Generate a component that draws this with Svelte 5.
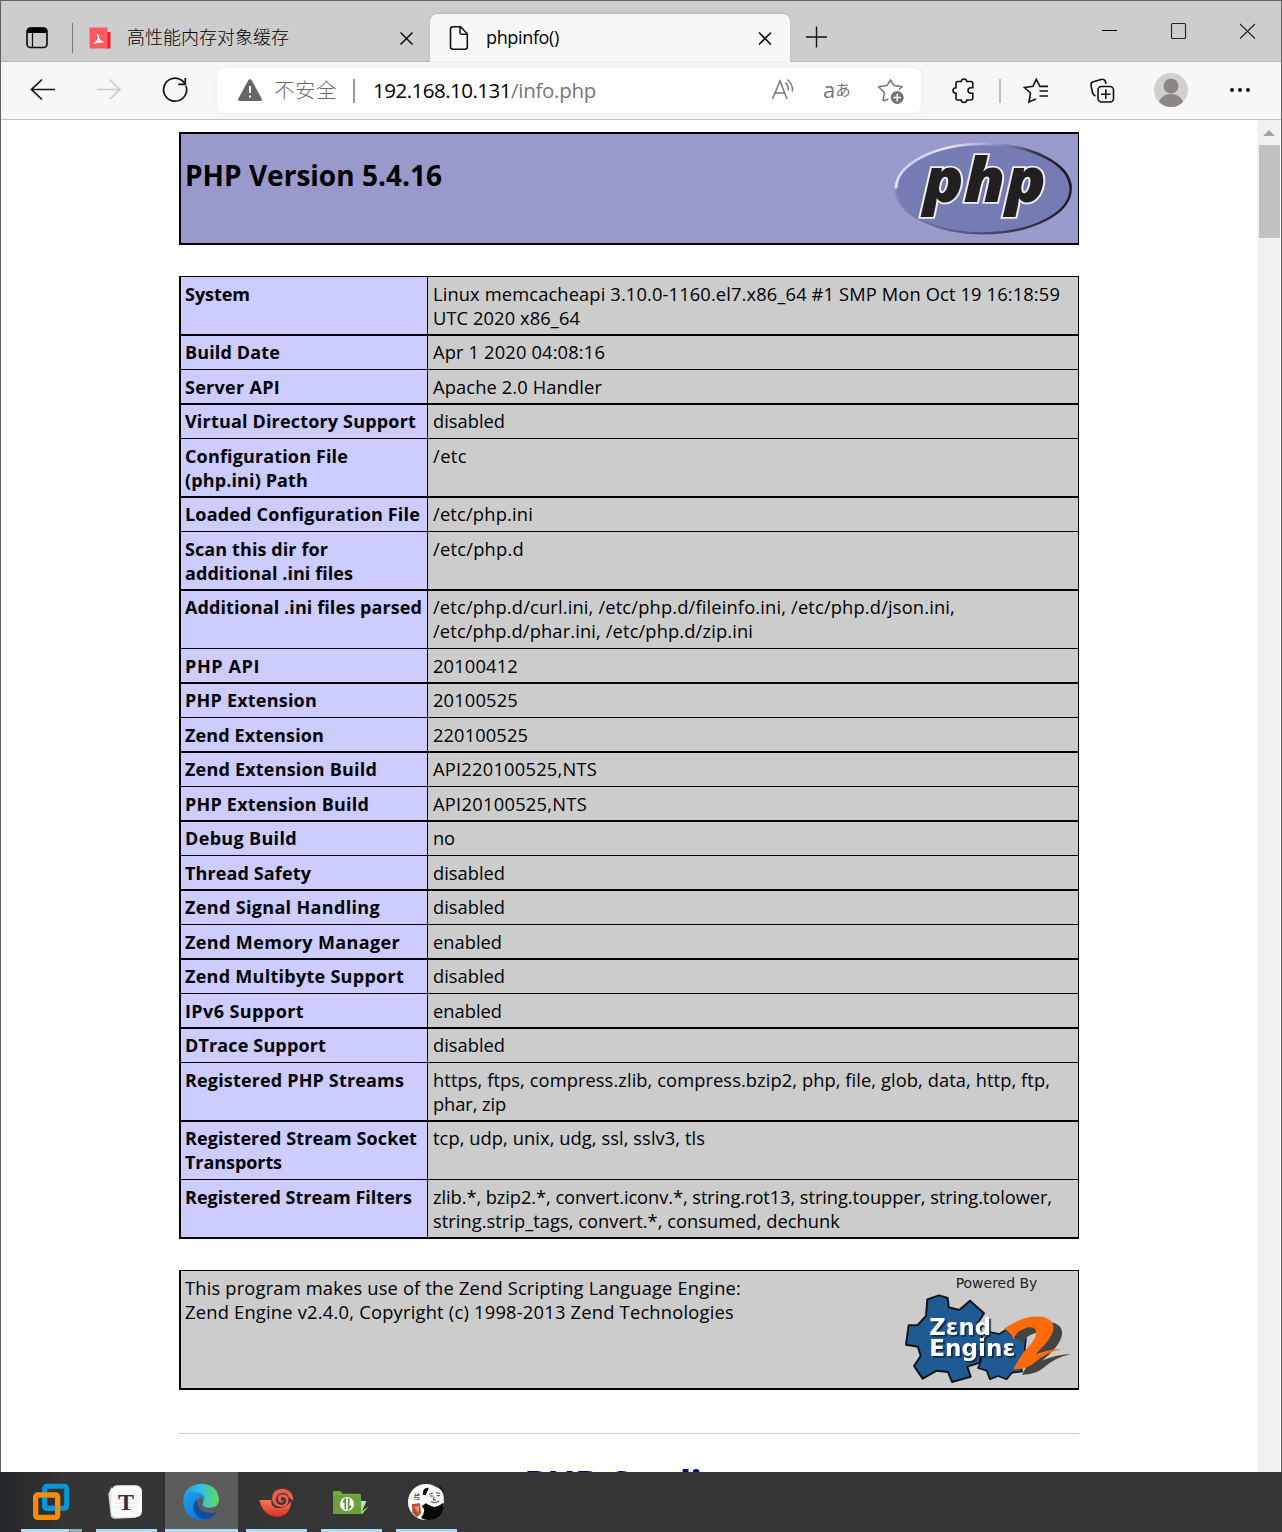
<script>
  const rows = [
    [[['System', 65]], [['Linux memcacheapi 3.10.0-1160.el7.x86_64 #1 SMP Mon Oct 19 16:18:59', 627], ['UTC 2020 x86_64', 147]]],
    [[['Build Date', 95]], [['Apr 1 2020 04:08:16', 172]]],
    [[['Server API', 95]], [['Apache 2.0 Handler', 169]]],
    [[['Virtual Directory Support', 231]], [['disabled', 72]]],
    [[['Configuration File', 163], ['(php.ini) Path', 123]], [['/etc', 34]]],
    [[['Loaded Configuration File', 235]], [['/etc/php.ini', 100]]],
    [[['Scan this dir for', 143], ['additional .ini files', 168]], [['/etc/php.d', 91]]],
    [[['Additional .ini files parsed', 237]], [['/etc/php.d/curl.ini, /etc/php.d/fileinfo.ini, /etc/php.d/json.ini,', 522], ['/etc/php.d/phar.ini, /etc/php.d/zip.ini', 320]]],
    [[['PHP API', 75]], [['20100412', 85]]],
    [[['PHP Extension', 132]], [['20100525', 85]]],
    [[['Zend Extension', 139]], [['220100525', 95]]],
    [[['Zend Extension Build', 192]], [['API220100525,NTS', 164]]],
    [[['PHP Extension Build', 184]], [['API20100525,NTS', 154]]],
    [[['Debug Build', 112]], [['no', 22]]],
    [[['Thread Safety', 126]], [['disabled', 72]]],
    [[['Zend Signal Handling', 195]], [['disabled', 72]]],
    [[['Zend Memory Manager', 215]], [['enabled', 69]]],
    [[['Zend Multibyte Support', 219]], [['disabled', 72]]],
    [[['IPv6 Support', 119]], [['enabled', 69]]],
    [[['DTrace Support', 141]], [['disabled', 72]]],
    [[['Registered PHP Streams', 219]], [['https, ftps, compress.zlib, compress.bzip2, php, file, glob, data, http, ftp,', 617], ['phar, zip', 73]]],
    [[['Registered Stream Socket', 232], ['Transports', 97]], [['tcp, udp, unix, udg, ssl, sslv3, tls', 272]]],
    [[['Registered Stream Filters', 227]], [['zlib.*, bzip2.*, convert.iconv.*, string.rot13, string.toupper, string.tolower,', 619], ['string.strip_tags, convert.*, consumed, dechunk', 407]]],
  ];

  function fit(node, width) {
    const natural = node.getBoundingClientRect().width;
    node.style.letterSpacing = (width - natural) / node.textContent.length + 'px';
  }
</script>

<div class="screen">
  <div class="window">
    <header class="tabs">
      <svg class="ws" viewBox="25 1 24 61" width="24" height="61"><rect x="27" y="28" width="20" height="19.5" rx="3.5" fill="none" stroke="#111" stroke-width="1.7"/><path d="M27 33v-2q0-3.5 3.5-3.5h13q3.500 0 3.500 3.500v2z" fill="#000"/><path d="M32.500 33v14" stroke="#111" stroke-width="1.200"/></svg>
      <span class="sep"></span>
      <svg class="pdf" viewBox="88 1 24 61" width="24" height="61"><rect x="106" y="32" width="4.500" height="16.500" fill="#f51d1d"/><rect x="89.500" y="27.500" width="18" height="21" rx="1" fill="#ff5a5f"/><path d="M97 34q2 2 1.500 4.500t-4 5M98.500 38.500q1 2.500 4.500 4M94 43.500q4-2.500 9.500-1.500" fill="none" stroke="#fff" stroke-width="1.500"/></svg>
      <span class="cn"><span use:fit={162}>高性能内存对象缓存</span></span>
      <svg class="tabx" viewBox="396 1 22 61" width="22" height="61"><path d="M400.500 32.500l12 12m0-12l-12 12" stroke="#111" stroke-width="1.600"/></svg>
      <div class="tab">
        <svg viewBox="448 14 24 48" width="24" height="48"><path d="M453 26.800h7.500l6.800 7v13q0 2.500-2.500 2.500h-11.800q-2.500 0-2.500-2.500v-17.500q0-2.500 2.500-2.500z" fill="none" stroke="#111" stroke-width="1.600"/><path d="M460 27v5.200q0 2 2 2h5" fill="none" stroke="#111" stroke-width="1.500"/></svg>
        <span class="tabname"><span use:fit={73}>phpinfo()</span></span>
        <svg viewBox="754 14 22 48" width="22" height="48"><path d="M759 32.500l12 12m0-12l-12 12" stroke="#111" stroke-width="1.600"/></svg>
      </div>
      <svg class="plus" viewBox="804 1 26 61" width="26" height="61"><path d="M806 37h21M816.500 26.500v21" stroke="#111" stroke-width="1.400"/></svg>
      <svg class="min" viewBox="1100 1 20 61" width="20" height="61"><path d="M1102 30.500h15" stroke="#000"/></svg>
      <svg class="max" viewBox="1168 1 22 61" width="22" height="61"><rect x="1171.500" y="23.500" width="14" height="15" rx="1" fill="none" stroke="#222" stroke-width="1.100"/></svg>
      <svg class="wx" viewBox="1238 1 20 61" width="20" height="61"><path d="M1240 24l15 14.500m0-14.500l-15 14.500" stroke="#222" stroke-width="1.100"/></svg>
    </header>

    <nav class="bar">
      <svg class="back" viewBox="28 62 30 57" width="30" height="57"><path d="M55 89.500H32M42 79.500l-10.500 10 10.500 10" fill="none" stroke="#111" stroke-width="1.700"/></svg>
      <svg class="fwd" viewBox="94 62 30 57" width="30" height="57"><path d="M97 89.500h23M109.500 79.500l10.500 10-10.500 10" fill="none" stroke="#ccc" stroke-width="1.700"/></svg>
      <svg class="reload" viewBox="160 62 30 57" width="30" height="57"><path d="M186 86a11.500 11.500 0 1 1-4-5.500l3.500 3.500M185.300 78v6.300h-7" fill="none" stroke="#111" stroke-width="1.700"/></svg>
      <div class="address">
        <svg class="warn" viewBox="236 68 28 45" width="28" height="45"><path d="M248.200 80.500q1.800-3 3.600 0l9.800 18q1 2.500-1.600 2.500h-20q-2.600 0-1.600-2.500z" fill="#666"/><path d="M250 86v7M250 95.500v2" stroke="#fff" stroke-width="2"/></svg>
        <span class="unsafe"><span use:fit={63}>不安全</span></span>
        <span class="asep"></span>
        <span class="host"><span use:fit={138}>192.168.10.131</span></span>
        <span class="path"><span use:fit={85}>/info.php</span></span>
        <svg class="read" viewBox="768 68 30 45" width="30" height="45"><path d="M772.500 99l7.500-18 7 18M775 93h10M785.500 82.500q3.500 3.500 2.500 8M787 79.500q6 4 5.500 12" fill="none" stroke="#757575" stroke-width="1.500"/></svg>
        <span class="translate"><b>a</b>あ</span>
        <svg class="fav" viewBox="876 68 30 45" width="30" height="45"><path d="M883 101l1.500-8.500-6-5.700 8.500-1.200 3.500-5.600 3.600 5.600 8 1.200-3.500 3M883.500 101l5-2" fill="none" stroke="#757575" stroke-width="1.500" stroke-linejoin="round"/><circle cx="897.200" cy="97.500" r="6.500" fill="#757575"/><path d="M893.500 97.500h7.400m-3.700-3.700v7.400" stroke="#fff" stroke-width="1.400"/></svg>
      </div>
      <svg class="ext" viewBox="948 62 30 57" width="30" height="57"><path d="M958 81.500h3.200q.3-2.500 2.800-2.500t2.800 2.500h4q2 0 2 2v4.200h-2q-2.800.2-2.800 2.800t2.800 2.800h2v4.700q0 2-2 2h-4q-.3 2.500-2.800 2.500t-2.800-2.500H958q-2 0-2-2v-4.700q-3-.3-3-2.800t3-2.800v-4.200q0-2 2-2z" fill="none" stroke="#111" stroke-width="1.600"/></svg>
      <span class="bsep"></span>
      <svg class="favs" viewBox="1020 62 32 57" width="32" height="57"><path d="M1036 99l-7 3 1.500-9-6-5.500 8.500-1.200 3.300-7 3.600 7h2M1039.500 86.400h8.500M1039.500 91h8.500M1039.500 96h8.500" fill="none" stroke="#111" stroke-width="1.600"/></svg>
      <svg class="coll" viewBox="1088 62 30 57" width="30" height="57"><rect x="1098" y="86.500" width="15.500" height="15.500" rx="3.500" fill="none" stroke="#111" stroke-width="1.600"/><path d="M1101 94.300h9.500m-4.700-4.800v9.600M1095.500 96q-2.500-1-3-3.500l-1.500-7q-.5-3 2.500-3.700l7.500-2.300q3.500-1 4.500 2.500l.6 2" fill="none" stroke="#111" stroke-width="1.600"/></svg>
      <svg class="user" viewBox="1152 62 38 57" width="38" height="57"><circle cx="1171" cy="90" r="17" fill="#d2d0cd"/><circle cx="1171" cy="86" r="7.500" fill="#8b8785"/><path d="M1159 102q3-8 12-8t12 8q-5 5-12 5t-12-5z" fill="#8b8785"/></svg>
      <svg class="more" viewBox="1226 62 28 57" width="28" height="57"><circle cx="1232" cy="90" r="1.900"/><circle cx="1240" cy="90" r="1.900"/><circle cx="1248" cy="90" r="1.900"/></svg>
    </nav>

    <div class="viewport">
      <main>
        <section class="head">
          <h1><span use:fit={257}>PHP Version 5.4.16</span></h1>
          <svg class="logo" viewBox="72 48 537 285" width="179" height="95">
            <defs><linearGradient id="rim" x1="0" y1="0" x2="1" y2=".35"><stop offset="0" stop-color="#8d8fc0"/><stop offset=".28" stop-color="#e8e8fa"/><stop offset=".55" stop-color="#8587ba"/><stop offset=".78" stop-color="#35334c"/><stop offset="1" stop-color="#1e1a20"/></linearGradient>
              <linearGradient id="low" x1="0" y1="0" x2="1" y2="0"><stop offset="0" stop-color="#8183b8"/><stop offset=".5" stop-color="#4b4b78"/><stop offset="1" stop-color="#1e1a20"/></linearGradient></defs>
            <ellipse cx="340" cy="191" rx="262" ry="134" fill="#777bb3"/>
            <path d="M78 191a262 134 0 0 1 524 0" fill="none" stroke="url(#rim)" stroke-width="8"/>
            <path d="M78 191a262 134 0 0 0 524 0" fill="none" stroke="url(#low)" stroke-width="7"/>
            <text x="160" y="232" textLength="368" lengthAdjust="spacingAndGlyphs">php</text>
          </svg>
        </section>

        <section class="info">
          {#each rows as [label, value]}
            <div class="row">
              <div class="key">{#each label as [t, w]}<p><span use:fit={w}>{t}</span></p>{/each}</div>
              <div class="val">{#each value as [t, w]}<p><span use:fit={w}>{t}</span></p>{/each}</div>
            </div>
          {/each}
        </section>

        <section class="zend">
          <div class="ztext"><p><span use:fit={556}>This program makes use of the Zend Scripting Language Engine:</span></p><p><span use:fit={549}>Zend Engine v2.4.0, Copyright (c) 1998-2013 Zend Technologies</span></p></div>
          <svg class="zlogo" viewBox="72 33 516 345" width="172" height="115">
            <text class="pow" x="227" y="84" textLength="245" lengthAdjust="spacingAndGlyphs">Powered By</text>
            <path d="M142 118l35-12 26 8 3 28 32 8 32-28 42 38-20 32 14 38-6 78-38 12 10 30-56 16-12-30-34-4-42 24-26-38 20-30-8-28-36-6 8-58 26 0 26-28z" fill="#205a93" stroke="#0d141c" stroke-width="6" stroke-linejoin="round"/>
            <path d="M312 240l18-24 28 6 22-14 20 20 38 8-4 32 8 20-20 20 4 26-30 4-16 20-26-10-24 10-10-26-26-8 10-24-6-24z" fill="#205a93" stroke="#0d141c" stroke-width="5" stroke-linejoin="round"/>
            <path d="M372 206q60-42 110-36 42 6 38 38-6 34-60 78 46-20 88-20-50 10-84 42-24 20-64 20 22-44 44-66 32-34 22-54-16-16-52 8-10 10-12 24-6-20-30-34z" transform="translate(26 16)" fill="#444"/>
            <path d="M372 206q60-42 110-36 42 6 38 38-6 34-60 78 46-20 88-20-50 10-84 42-24 20-64 20 22-44 44-66 32-34 22-54-16-16-52 8-10 10-12 24-6-20-30-34z" fill="#ff6a09"/>
            <g class="zword"><text x="148" y="226" textLength="185" lengthAdjust="spacingAndGlyphs">Zɛnd</text><text x="148" y="289" textLength="258" lengthAdjust="spacingAndGlyphs">Enginɛ</text></g>
          </svg>
        </section>
        <hr />
        <h2><span use:fit={210}>PHP Credits</span></h2>
      </main>
      <aside><svg viewBox="0 0 23 25" width="23" height="25"><path d="M6 16l6-6 6 6z" fill="#a3a3a3"/></svg><i></i></aside>
    </div>
  </div>

  <footer>
    <div class="app a1"><svg viewBox="63 36 183 171" width="61" height="57"><rect x="134" y="79" width="66" height="66" rx="6" fill="none" stroke="#0596d7" stroke-width="15"/><rect x="107" y="105" width="66" height="67" rx="6" fill="none" stroke="#f48d0c" stroke-width="16"/><path d="M134 113v26q0 6 6 6h26" fill="none" stroke="#0596d7" stroke-width="15"/></svg></div>
    <div class="app a2"><svg viewBox="288 36 183 171" width="61" height="57"><path d="M334 82l-9 20 7 62q1 12 14 12l62-3z" fill="#ddd"/><rect x="334" y="76" width="92" height="96" rx="18" fill="#fafafa"/><path d="M345 108h68M345 119h68M345 130h68M345 141h68" stroke="#ddd" stroke-width="2"/><text class="tee" x="354" y="150" textLength="48" lengthAdjust="spacingAndGlyphs">T</text></svg></div>
    <div class="app a3"><svg viewBox="495 36 219 171" width="73" height="57">
      <defs><linearGradient id="e1" x1="0" x2="1"><stop offset="0" stop-color="#239ee0"/><stop offset=".5" stop-color="#2fc2df"/><stop offset="1" stop-color="#62dd55"/></linearGradient><linearGradient id="e2" x1="0" x2="1" y1="0" y2="1"><stop offset="0" stop-color="#1da2e8"/><stop offset="1" stop-color="#0868d0"/></linearGradient></defs>
      <path d="M550 119q6-47 55-48 49 3 52 49-2 25-31 23-23-1-17-14 7-16-9-26-26-10-50 16z" fill="url(#e1)"/><path d="M549 122q8-27 34-27 26 2 33 20-20-9-26 10-3 35 34 42 14 1 24-4-18 19-48 17-47-5-51-58z" fill="url(#e2)"/><path d="M590 118q-18 20-4 43 16 24 46 13 12-7 18-18-18 7-37 0-23-12-23-38z" fill="#0c4fa0"/></svg></div>
    <div class="app a4"><svg viewBox="18 36 183 171" width="61" height="57">
      <defs><linearGradient id="s" x1="0" x2="0" y1="0" y2="1"><stop offset="0" stop-color="#f3775a"/><stop offset="1" stop-color="#e22b25"/></linearGradient></defs>
      <path d="M58 120h36q-2 20 16 24 26 3 44-20-4 44-42 47-42-2-54-51z" fill="url(#s)"/><path d="M160 123q0-35-34-37-30 2-30 31 2 23 27 24 22-1 23-21-1-16-18-17-14 0-15 13 1 11 11 12 8-1 8-8-5 5-9 0-2-7 5-8 10 1 10 11-1 12-14 12-16-2-16-17 2-18 20-19 14 0 18 13z" fill="#ee5b47"/></svg></div>
    <div class="app a5"><svg viewBox="243 36 183 171" width="61" height="57"><path d="M279 97q0-4 4-4h18l7 8h50q5 0 5 5v56h-84z" fill="#76a83a"/><path d="M279 106h84v56h-84z" fill="#6da03c"/><path d="M363 122l16 2-12 28 20-14-20 24h-4z" fill="#9ccc4b"/><path d="M364 122l15 2-14 28z" fill="#ccd9cc"/><circle cx="321" cy="132" r="21" fill="#fff"/><path d="M316 148v-30l-7 9M326 115v31l7-9" fill="none" stroke="#588c31" stroke-width="5"/></svg></div>
    <div class="app a6"><svg viewBox="468 36 183 171" width="61" height="57"><circle cx="558" cy="126" r="54" fill="#fff"/><path d="M549 105q-3-23 17-22l-7 23zM595 78q15 4 14 20zM558 130q20 18 53-2 3 34-24 48-28 10-44-3 18-20 2-35z" fill="#080808"/><ellipse cx="584" cy="111" rx="27" ry="30" fill="#f7f7f7"/><path d="M567 103l12-4M588 98l12 2M570 108h10M590 107h10M582 110l-2 10h8M572 125q12 8 26-2" fill="none" stroke="#444" stroke-width="3"/><path d="M516 132l24-2 3 30-12 12-14-14z" fill="#b64f30"/><path d="M522 140l16-2-3 22z" fill="#e89573"/><text class="gei" x="522" y="118">给</text></svg></div>
  </footer>
</div>

<style>
  :global(body) { margin: 0; overflow: hidden; }
  .screen { width: 1282px; height: 1532px; overflow: hidden; background: #fff; color: #000; font-family: "Open Sans", "Noto Sans", "Noto Sans CJK SC", sans-serif; }
  svg { display: block; flex: none; }
  span { white-space: nowrap; }
  .window { box-sizing: border-box; height: 1472px; border: 1px solid #626262; border-bottom: 0; }
  .tabs { display: flex; height: 61px; background: #cdcdcd; box-shadow: inset 0 -2px 1px -1px #b8b8b8; }
  .ws { margin-left: 24px; }
  .sep { width: 1px; height: 30px; margin: 22px 15px 0 23px; background: #777; }
  .cn { width: 269px; margin-left: 15px; font: 300 18px/24px "Noto Sans CJK SC", sans-serif; padding-top: 23px; box-sizing: border-box; }
  .tab { display: flex; box-sizing: border-box; width: 360px; height: 48px; margin: 13px 0 0 12px; padding-left: 18px; background: #f7f7f7; border-radius: 7px 7px 0 0; box-shadow: 0 -1px 2px #b5b5b5; }
  .tabname { width: 268px; margin-left: 14px; padding-top: 11px; font-size: 18px; line-height: 25px; }
  .plus { margin-left: 14px; }
  .min { margin-left: 270px; }
  .max, .wx { margin-left: 48px; }
  .bar { display: flex; height: 57px; background: #f7f7f7; border-bottom: 1px solid #c3c3c3; }
  .back { margin-left: 27px; }
  .fwd, .reload { margin-left: 36px; }
  .address { display: flex; width: 704px; height: 45px; margin: 6px 0 0 27px; border-radius: 7px; background: #fff; box-shadow: 0 0 4px #e8e8e8; line-height: 45px; font-size: 20.500px; }
  .warn { margin-left: 19px; }
  .unsafe { width: 63px; margin-left: 10px; font-family: "Noto Sans CJK SC", sans-serif; color: #6b6b6b; font-weight: 300; line-height: 43px; }
  .asep { width: 2px; height: 24px; margin: 11px 18px 0 16px; background: #999; }
  .host { width: 138px; }
  .path { width: 85px; color: #777; }
  .read { margin-left: 172px; }
  .translate { display: flex; width: 28px; margin-left: 25px; color: #757575; font: 15.500px/42px "Noto Sans CJK JP", sans-serif; }
  .translate b { font: 22px/42px "Open Sans", sans-serif; }
  .fav { margin-left: 25px; }
  .ext { margin-left: 27px; }
  .bsep { width: 2px; height: 24px; margin: 17px 19px 0 21px; background: #c2c2c2; }
  .coll { margin-left: 36px; }
  .user { margin-left: 34px; }
  .more { margin-left: 36px; }
  .viewport { display: flex; height: 1352px; overflow: hidden; background: #fff; }
  main { width: 900px; margin-left: 178px; padding-top: 12px; flex: none; }
  aside { width: 23px; margin-left: 178px; background: #f1f1f1; flex: none; }
  aside i { display: block; width: 21px; height: 93px; margin-left: 2px; background: #c1c1c1; }
  section { box-sizing: border-box; border: solid #000; border-width: 1px 1px 2px 2px; font-size: 18.300px; line-height: 24px; }
  p { margin: 0; height: 24px; }
  .head { display: flex; justify-content: space-between; height: 113px; border-top-width: 2px; background: #9999cc; }
  h1 { margin: 22px 0 0 4px; font-size: 28px; line-height: 38px; font-weight: 700; }
  .logo { margin: 7px 5px 0 0; overflow: visible; }
  .logo text { font: italic 800 188px "Open Sans", sans-serif; fill: #231f20; stroke: #eee; stroke-width: 11px; paint-order: stroke; }
  .info { margin-top: 31px; }
  .row { display: flex; }
  .row:nth-child(even) { border-top: 2px solid #000; }
  .row:nth-child(odd):not(:first-child) { border-top: 1px solid #000; }
  .key, .val { box-sizing: border-box; padding: 5px 0 4px 4px; }
  .row:nth-child(even) > div { padding-top: 4px; padding-bottom: 5px; }
  .key { width: 247px; border-right: 1px solid #000; background: #ccccff; font-size: 18px; font-weight: 700; }
  .val { flex: 1; padding-left: 5px; background: #ccc; }
  .zend { display: flex; justify-content: space-between; height: 120px; margin-top: 31px; background: #ccc; }
  .ztext { padding: 5px 0 0 4px; }
  .zlogo { margin-right: 2px; }
  .pow { font: 42px "DejaVu Sans", sans-serif; fill: #222; }
  .zword { filter: drop-shadow(5px 5px 1px #102943); }
  .zword text { font: bold 70px "DejaVu Sans", sans-serif; fill: #fff; }
  hr { height: 1px; margin: 43px 0 0; border: 0; background: #ccc; }
  h2 { margin: 24px 0 0; text-align: center; color: #000099; font-size: 38px; line-height: 50px; font-weight: 700; }
  footer { display: flex; height: 60px; background: linear-gradient(90deg, #222528, #353535 5%, #363636); }
  .app { height: 57px; border-bottom: 3px solid #acdcfb; }
  .a1 { margin-left: 21px; border-image: linear-gradient(90deg, #acdcfb 77%, #6d8492 77%, #6d8492 80%, #8eaec2 80%) 1; }
  .a2 { margin-left: 14px; }
  .a3 { margin-left: 8px; background: #5c5c5c; }
  .a4 { margin-left: 8px; }
  .a5, .a6 { margin-left: 14px; }
  .tee { font: bold 72px "Liberation Serif", serif; fill: #333; }
  .gei { font: 19px "Noto Sans CJK SC", sans-serif; fill: #222; }
</style>
